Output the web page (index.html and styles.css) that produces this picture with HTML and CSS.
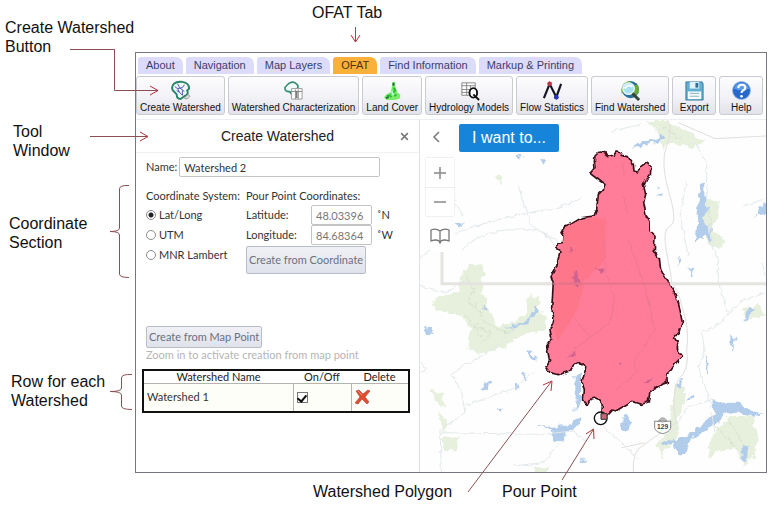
FILE: index.html
```html
<!DOCTYPE html>
<html lang="en">
<head>
<meta charset="utf-8">
<title>OFAT Create Watershed tool</title>
<link rel="stylesheet" href="styles.css">
</head>
<body>
<div class="guide">
  <aside class="notes">
    <p class="note note-button">Create Watershed Button</p>
    <p class="note note-window">Tool<br>Window</p>
    <p class="note note-coord">Coordinate<br>Section</p>
    <p class="note note-row">Row for each<br>Watershed</p>
  </aside>
  <div class="stage">
    <p class="note caption-top">OFAT Tab</p>
    <main class="app">
      <nav class="tabs">
        <a class="tab" href="#">About</a>
        <a class="tab" href="#">Navigation</a>
        <a class="tab" href="#">Map Layers</a>
        <a class="tab active" href="#">OFAT</a>
        <a class="tab" href="#">Find Information</a>
        <a class="tab" href="#">Markup &amp; Printing</a>
      </nav>
      <div class="toolbar">
        <button class="tool" type="button">
          <svg class="icon" viewBox="0 0 22 22"><path d="M4 4Q8 1 13 2Q20 3 20 9L18 11Q20 15 15 17L11 20Q7 20 7 15L3 11Q1 7 4 4Z" fill="#eef9f6" stroke="#278267" stroke-width="2"/><path d="M5 7l3 2 2 4 3 3M8 4l2 4 5 4M8 9l5-1 2-3M10 13l-3-2M13 16v-5" fill="none" stroke="#4b50b4"/><path d="M15 19l4-4 2 2-3 3z" fill="#ddd" stroke="#888" stroke-width=".8"/></svg>
          <span>Create Watershed</span></button>
        <button class="tool" type="button">
          <svg class="icon" viewBox="0 0 22 22"><path d="M9 15L7 12Q2 13 2 8Q4 5 7 3Q11 1 14 4Q17 6 15 9" fill="#f0faf7" stroke="#2f8a70" stroke-width="1.700"/><path d="M9 9h11v11H9z" fill="#fff" stroke="#999"/><path d="M9 12h11M13 10v10M16 10v10" stroke="#888"/><path d="M14.500 12v7" stroke="#333"/></svg>
          <span>Watershed Characterization</span></button>
        <button class="tool" type="button">
          <svg class="icon" viewBox="0 0 22 22"><path d="M11 2h3v5l1 3 1 3 3 2v4l-5 2H5l-3-3 3-3 4-2 1-4z" fill="#79ed69"/><path d="M12 8l2 3-2 2-3 1M5 17l3-1 2 2M13 17l2-2" fill="none" stroke="#2dbb32" stroke-width="2"/><path d="M12 3v3M4 19l3-1" stroke="#27634c" stroke-width="2"/><path d="M10 12l2 4" stroke="#b8ffd7" stroke-width="2"/></svg>
          <span>Land Cover</span></button>
        <button class="tool" type="button">
          <svg class="icon" viewBox="0 0 22 22"><path d="M3 3h14v13H3zM3 6h14M3 10h14M3 13h14M8 3v13M12 6v10" fill="#fff" stroke="#858585"/><ellipse cx="15" cy="13.500" rx="4" ry="5" fill="#fff" stroke="#111" stroke-width="2"/><path d="M15 15l6 6" stroke="#111" stroke-width="2"/></svg>
          <span>Hydrology Models</span></button>
        <button class="tool" type="button">
          <svg class="icon" viewBox="0 0 22 22"><path d="M2 19L8 4L15 18L20 4" fill="none" stroke="#161626" stroke-width="2.300"/><circle cx="8" cy="4" r="2.500" fill="#bc3545"/><circle cx="15" cy="18" r="2.500" fill="#2532b5"/></svg>
          <span>Flow Statistics</span></button>
        <button class="tool" type="button">
          <svg class="icon" viewBox="0 0 22 22"><circle cx="11" cy="10" r="9" fill="#2c7199"/><path d="M4 4q5-4 8-2l-3 4-5 4-2 5q-2-6 2-11zM14 6l5-1 1 7-4 5-3-4z" fill="#6bac38"/><circle cx="9" cy="9" r="6" fill="#a8e2ee" stroke="#e8f7f8" stroke-width="1.500"/><path d="M5 9q3-5 8-2" fill="none" stroke="#fff" stroke-width="2"/><path d="M13 14l7 7" stroke="#34483a" stroke-width="3"/></svg>
          <span>Find Watershed</span></button>
        <button class="tool" type="button">
          <svg class="icon" viewBox="0 0 22 22"><path d="M2 2h17l1 2v17H2z" fill="#62aed2" stroke="#347b9e"/><path d="M6 2h10v7H6z" fill="#e0f3fa"/><path d="M12 3h3v5h-3z" fill="#326f91"/><path d="M4 12h14v8H4z" fill="#fafefe"/><path d="M6 14h10M6 17h10" stroke="#7eafc2"/></svg>
          <span>Export</span></button>
        <button class="tool" type="button">
          <svg class="icon" viewBox="0 0 22 22"><circle cx="11" cy="11" r="9.500" fill="#2868c9" stroke="#a9c5ea"/><path d="M3 9Q5 3 11 3Q17 3 19 9Q12 13 3 9z" fill="#5b9ce9"/><path d="M7.500 8.500Q8 5 11.500 5Q15 5 15 8Q15 10 12.500 11Q11 12 11 13.500" fill="none" stroke="#fff" stroke-width="2.200"/><circle cx="11" cy="17" r="1.400" fill="#fff"/></svg>
          <span>Help</span></button>
      </div>
      <div class="work">
        <section class="panel">
          <header class="panel-head">
            <h1>Create Watershed</h1>
            <button class="close" type="button" aria-label="Close"><svg viewBox="0 0 8 8"><path d="M1 1l6 6M7 1l-6 6" stroke="#777" stroke-width="1.300"/></svg></button>
          </header>
          <form class="form">
            <div class="name-row"><label for="name">Name:</label><input class="box" id="name" type="text" value="Watershed 2"></div>
            <div class="coords">
              <fieldset class="systems">
                <legend>Coordinate System:</legend>
                <label><input type="radio" name="system" checked>Lat/Long</label>
                <label><input type="radio" name="system">UTM</label>
                <label><input type="radio" name="system">MNR Lambert</label>
              </fieldset>
              <fieldset class="point">
                <legend>Pour Point Coordinates:</legend>
                <div class="coord"><label for="lat">Latitude:</label><input class="box" id="lat" type="text" value="48.03396"><span>˚N</span></div>
                <div class="coord"><label for="lon">Longitude:</label><input class="box" id="lon" type="text" value="84.68364"><span>˚W</span></div>
                <button class="action tall" type="button">Create from Coordinate</button>
              </fieldset>
            </div>
            <button class="action" type="button">Create from Map Point</button>
            <p class="hint">Zoom in to activate creation from map point</p>
          </form>
          <table class="sheds">
            <thead><tr><th class="col-name">Watershed Name</th><th class="col-on">On/Off</th><th>Delete</th></tr></thead>
            <tbody><tr>
              <td>Watershed 1</td>
              <td><input type="checkbox" aria-label="Show Watershed 1" checked></td>
              <td><button class="delete" type="button" aria-label="Delete Watershed 1"><svg viewBox="0 0 16 16"><path d="M1 2l3-1 4 4 5-4 2 1-5 6 4 5-2 2-5-5-4 5-3-1 5-6z" fill="#e24b30" stroke="#b23a2b" stroke-width=".6"/><path d="M3 2l4 4" stroke="#f5977d"/></svg></button></td>
            </tr></tbody>
          </table>
        </section>
        <section class="map">
          <svg class="map-art" viewBox="15 12 1038 1059" preserveAspectRatio="xMinYMin slice">
            <defs>
              <filter id="rough" x="-5%" y="-5%" width="110%" height="110%" color-interpolation-filters="sRGB"><feTurbulence type="fractalNoise" baseFrequency=".07" numOctaves="1" seed="4"/><feDisplacementMap in="SourceGraphic" scale="14" xChannelSelector="R" yChannelSelector="G"/></filter>
              <filter id="ragged" x="-5%" y="-5%" width="110%" height="110%" color-interpolation-filters="sRGB"><feTurbulence type="fractalNoise" baseFrequency=".05" numOctaves="2" seed="9"/><feDisplacementMap in="SourceGraphic" scale="24" xChannelSelector="R" yChannelSelector="G"/></filter>
            </defs>
            <rect x="15" y="12" width="1400" height="1400" fill="#fdfefd"/>
            <g fill="#e6f0dc" filter="url(#ragged)">
              <path d="M155 455l45-12 10 20-10 30 5 50 20 50 20 37 60-12 30-35-5-25 20-20 25 10-5 35 25 25-10 40-55 3-50 35-70 28-50-12 5-60-30-50-65-8-20-15 20-25 60-15 10-55z"/>
              <path d="M690 15l60 0 40 18 80 45-30 15-70-10-30 15-10-50zM870 245l45 10-8 50-20 40 45 25-15 25-35-5-30-60z"/>
              <path d="M780 800l30 10 0 50-20 40-5 60-45 65-15-40 35-50 10-60zM890 960l60-60 60 0 20 60-10 60-30 25-30-50-50 10-30 20z"/>
              <path d="M240 180l30 0-15 30zM980 580l50-12 20 30-60 15zM45 820l40 10 5 50-25-20zM85 965l45 0-5 45-40-10zM70 885l30 40-15 30zM360 1055l40-5 0 20h-45z"/>
            </g>
            <g fill="none" stroke="#d3e2d0" stroke-width="3" filter="url(#ragged)">
              <path d="M150 480l30 40-20 40 40 30-20 40 50 20-30 30M180 560l30 60 60 30 40-20M150 600l50 60M740 30l60 40M895 920l70 80M930 900l60 90M880 270l10 90"/>
            </g>
            <g fill="#b2cceb" filter="url(#ragged)">
              <path d="M855 205l13 0 0 60 17 8-20 35 25 35-3 35-18-20-27 20 5-70z"/>
              <path d="M365 930l50 2 50-8 35-22-10 25-35 25-22 27-18-2-5-40-45-3z"/>
              <path d="M478 780l20-10 0 85-20 35 5-60zM620 915l15-22 17 30-15 25-20-5zM195 820l15-20 15-8-2 25-12 8zM300 820l20-5-15-15zM317 765l12 0 8 32-7 0zM1020 310l20-45 15-5 0 30-25 5z"/>
              <path d="M895 850l25 10 50 0 50 30 25 5-30 7-45-15-40 5-25 30-45 30-40 20-5-10 50-40 35-30-10-20zM780 800l25-15-10 30zM815 855l20-22 5 15zM740 975l35-5 55-15-20 60-20 0-15-30-30 5zM980 985l20 5-5 45-15-5zM650 95l30-18 40-7 20-15 12 5-25 18-22 3-25 12z"/>
              <path d="M375 130l20 0-8 13zM118 325l35-3-10 10zM335 700l25 20 5 18-30-28zM205 565l12 20-15-5zM785 430l12-5-10 23zM820 455l18 0-8 30zM945 655l14 15-9 38zM30 635l20 5-10 17zM40 650l18 5-20 3zM305 117l15 0-10 15zM870 715l8 28-3 42-5-35zM270 640l65-25 30-45 8 10-35 45zM1005 570l15 10-30 35-8-5zM495 1025l20 8-17 9zM245 880l18-4-8 15zM725 205l10 8-8 3zM720 237l25-5 0 8z"/>
            </g>
            <g fill="none" stroke="#e2e8ec" stroke-width="3" filter="url(#rough)">
              <path d="M15 430Q60 380 110 355Q200 320 340 290L430 275 500 245M140 405Q180 350 290 340T420 395M310 210L335 290 350 330 435 380M110 240l35 60M590 45l90-20M840 80l35 60 0 150 15 90 20 60 0 60 30 90-20 30-60 30 10 55-20 50 35 100 15 100M1000 1020l-20 40M15 740Q45 760 20 770M300 640l-95 80-65 30-30 25 30 55 10 60-75 50 5 150-15 55M75 950l300 5 100-10M150 870l150-55 60-50M430 985l-45 55-90 10M470 945l50 35M560 930l50 40 60 60M985 270l60-20M1040 440l20 60M820 420l-25-120 20-110M15 510l80 20 60-40M900 850l-80 20-50 80M940 590l50-40 60-20"/>
            </g>
            <g fill="none" stroke="#e3dedb" stroke-width="3">
              <path d="M758 12Q775 40 755 90T762 230 765 330 755 410 770 500Q790 520 800 570Q825 640 815 700Q825 760 790 790Q765 850 785 920Q720 960 690 985Q650 1000 655 1071"/>
              <path d="M790 20L900 68 1053 60M620 995l70-15"/>
            </g>
            <path d="M81 408V503H1400" fill="none" stroke="#e5e4e0" stroke-width="9"/>
            <g filter="url(#rough)">
              <path d="M540 120L552 108 570 110 578 122 597 117 603 108 618 110 622 118 640 122 645 132 655 145 657 165 668 168 680 152 697 139 708 148 706 180 690 195 685 205 692 235 686 260 694 300 705 315 706 345 720 358 718 405 733 430 737 460 750 485 765 505 780 535 790 560 797 595 803 625 793 645 778 665 788 680 787 700 802 720 785 738 770 760 755 775 757 800 740 805 728 812 705 825 700 858 680 865 650 856 640 865 605 885 590 882 578 895 572 905 560 895 562 870 555 852 540 845 525 850 515 868 505 850 508 820 500 800 512 755 490 738 478 745 465 765 430 776 405 770 393 755 404 735 395 690 410 670 405 640 418 610 410 580 415 500 408 480 425 450 435 405 420 395 430 382 445 380 447 365 438 350 450 330 475 320 500 305 537 300 545 280 550 235 565 220 570 205 555 195 525 172 540 155 538 135Z" fill="#ff7d99" stroke="#351018" stroke-width="5" stroke-linejoin="round"/>
              <path d="M450 335l50-25 72-5-2 130-60 60-20 80-60 100-12-20 2-170 20-80z" fill="#fd7689"/>
              <path d="M470 485l15-20 12 35-10 15zM540 455l25 5-5 15zM455 725l30-20-5 20zM685 800l30-18-15 20zM612 738l10 5-8 8zM465 395l10 5-8 8z" fill="#cf638f"/>
              <path d="M475 600l50 65 60-45 15-70-30-80 0-100M620 140l10 40M625 240l15 50M640 370l45 130 20 80 15 60-60 90 0 45-60 50M525 665l-65 50" fill="none" stroke="#ea7894" stroke-width="3"/>
            </g>
            <path d="M415 503H763" stroke="#e6758b" stroke-width="7"/>
            <circle cx="557" cy="907" r="19" fill="none" stroke="#111" stroke-width="4"/>
            <path d="M558 893h18v17h-18z" fill="#c96777" stroke="#333" stroke-width="3"/>
            <path d="M730 914q13-18 26 0z" fill="#bbb" stroke="#888" stroke-width="2"/>
            <path d="M719 915q24 5 48 0v22q-5 12-24 16q-19-4-24-16z" fill="#fff" stroke="#888" stroke-width="3"/>
            <text class="route" x="743" y="940">129</text>
          </svg>
          <div class="map-ui">
            <div class="map-top">
              <button class="map-back" type="button" aria-label="Collapse panel"><svg viewBox="0 0 12 12"><path d="M8 1L3 6l5 5" fill="none" stroke="#777" stroke-width="1.500"/></svg></button>
              <button class="want" type="button">I want to...</button>
            </div>
            <div class="zoom">
              <button type="button" aria-label="Zoom in"><svg viewBox="0 0 14 14"><path d="M1 7h12M7 1v12" stroke="#888" stroke-width="1.500"/></svg></button>
              <button type="button" aria-label="Zoom out"><svg viewBox="0 0 14 14"><path d="M1 7h12" stroke="#888" stroke-width="1.500"/></svg></button>
            </div>
            <button class="book" type="button" aria-label="Bookmarks"><svg viewBox="0 0 20 16"><path d="M10 3Q6 0 1 2v11q5-2 8 0l1 2 1-2q3-2 8 0V2q-5-2-9 1zv11" fill="none" stroke="#777" stroke-width="1.300"/></svg></button>
          </div>
        </section>
      </div>
    </main>
    <div class="captions-bottom">
      <p class="note">Watershed Polygon</p>
      <p class="note">Pour Point</p>
    </div>
  </div>
  <svg class="pointers" width="773" height="526" viewBox="0 0 773 526" aria-hidden="true">
    <g fill="none" stroke="#8a5054">
      <path d="M70 49.500H114.500V90.500H158M90 136.500H147M355.500 27V42M468 492L551 382M562 480L593 430"/>
      <path d="M129 185.500Q119.500 185 119.500 189V228Q119.500 231.500 110 231.500Q119.500 231.500 119.500 235V274Q119.500 277.500 129 277.500M132 374.500Q121.500 374 121.500 378V388Q121.500 391.500 110 391.500Q121.500 391.500 121.500 395V406Q121.500 409.500 132 409.500"/>
    </g>
    <g fill="none" stroke="#bd3038">
      <path d="M150 86L158 90.500 150 95M140 132L148 136.500 140 141M351 35L355.500 42 360 35M543 385L552 381 551 391M586 434L593.500 429 594 439"/>
    </g>
  </svg>
</div>
</body>
</html>
```
FILE: styles.css
```css
* { box-sizing: border-box; }
body {
  margin: 0;
  background: #fff;
  color: #333;
  font-family: "Liberation Sans", Arial, sans-serif;
}
button, input { font: inherit; margin: 0; }
button { cursor: pointer; }
p, h1 { margin: 0; }
svg { display: block; }

.guide {
  position: relative;
  display: grid;
  grid-template-columns: 135px minmax(0, 1fr);
  min-height: 100vh;
}
.note {
  color: #111;
  font-size: 16px;
  line-height: 19px;
  white-space: nowrap;
}
.notes { display: flex; flex-direction: column; padding: 18px 0 0 5px; }
.note-button { white-space: normal; }
.note-window { margin: 66px 0 0 8px; }
.note-coord { margin: 54px 0 0 4px; }
.note-row { margin: 120px 0 0 6px; }
.stage { display: flex; flex-direction: column; padding-right: 6px; }
.caption-top { padding: 3px 0 30px 177px; }
.captions-bottom { display: flex; gap: 50px; padding: 9px 0 25px 178px; }
.pointers { position: absolute; top: 0; left: 0; pointer-events: none; }

.app {
  flex: 1;
  display: flex;
  flex-direction: column;
  border: 1px solid #74777e;
}
.tabs { display: flex; gap: 3px; padding: 4px 2px 0; }
.tab {
  padding: 0 8px;
  border-radius: 3px 7px 0 0;
  background: #dcdcfa;
  color: #3c3c6c;
  font-size: 11px;
  line-height: 17px;
  text-decoration: none;
  white-space: nowrap;
}
.tab.active { background: #fbb03c; color: #4c3513; }
.toolbar { display: flex; gap: 3px; padding: 2px 0 4px; }
.tool {
  display: flex;
  flex-direction: column;
  align-items: center;
  min-width: 44px;
  height: 39px;
  padding: 3px 3px 0;
  border: 1px solid #c9cbd2;
  border-radius: 3px;
  background: linear-gradient(#fdfdfe, #f3f3f8 50%, #e2e3e9);
  color: #111;
  font-size: 10px;
  line-height: 14px;
  white-space: nowrap;
}
.icon { width: 21px; height: 21px; flex: none; }

.work {
  flex: 1;
  display: grid;
  grid-template-columns: 284px minmax(0, 1fr);
  border-top: 1px solid #eceef2;
}
.panel {
  border-right: 1px solid #dfe3e8;
  font-family: Lato, "Open Sans", sans-serif;
  font-size: 11px;
  line-height: 14px;
}
.panel-head {
  display: grid;
  grid-template-columns: 28px 1fr 28px;
  align-items: center;
  height: 33px;
  border-bottom: 1px solid #f0f1f3;
}
.panel-head h1 {
  grid-column: 2;
  color: #222;
  font: 14px/18px "Liberation Sans", Arial, sans-serif;
  text-align: center;
}
.close { padding: 8px 9px; border: 0; background: none; }
.close svg { width: 9px; height: 9px; }
.form { padding: 4px 10px 0; }
.name-row { display: flex; align-items: center; gap: 2px; }
.box {
  height: 20px;
  padding: 0 4px;
  border: 1px solid #c4c4c4;
  border-radius: 2px;
  background: #fff;
  color: #333;
}
.name-row .box { width: 201px; }
.coords { display: flex; gap: 8px; margin-top: 12px; }
fieldset { min-width: 0; margin: 0; padding: 0; border: 0; }
legend { padding: 0; }
.systems { display: flex; flex-direction: column; width: 92px; white-space: nowrap; }
.systems label { display: flex; align-items: center; gap: 3px; height: 20px; }
.systems legend, .point legend { margin-bottom: 2px; }
.systems input {
  appearance: none;
  width: 10px;
  height: 10px;
  border: 1px solid #8c8c8c;
  border-radius: 50%;
}
.systems input:checked { background: radial-gradient(#222 0 2px, #fff 3px); }
.coord { display: flex; align-items: center; height: 20px; }
.coord label { width: 65px; }
.coord .box { width: 61px; color: #777; }
.coord span { margin-left: 5px; }
.action {
  display: block;
  height: 22px;
  padding: 0 2px;
  border: 1px solid #b9bdc8;
  border-radius: 2px;
  background: linear-gradient(#f0f1f6, #dfe2ec);
  color: #6c717d;
  white-space: nowrap;
}
.action.tall { height: 28px; margin-top: 1px; }
.form > .action { margin-top: 52px; }
.hint { color: #b5b5b5; }
.sheds {
  width: 268px;
  margin: 7px 0 0 6px;
  border: 2px solid #111;
  border-collapse: collapse;
  table-layout: fixed;
}
.sheds th { height: 13px; padding: 0; font-weight: 400; line-height: 12px; color: #222; }
.sheds td { height: 28px; padding: 0 3px; border: 1px solid #b5b5b0; background: #fefef8; }
.col-name { width: 150px; }
.col-on { width: 58px; }
.sheds input {
  appearance: none;
  display: grid;
  place-items: center;
  width: 11px;
  height: 11px;
  border: 1px solid #777;
  background: #fff;
}
.sheds input:checked::after {
  content: "";
  width: 4px;
  height: 7px;
  border: solid #111;
  border-width: 0 2px 2px 0;
  transform: rotate(40deg);
}
.delete { display: block; padding: 0; border: 0; background: none; }
.delete svg { width: 16px; height: 16px; }

.map { position: relative; overflow: hidden; }
.map-art { position: absolute; inset: 0; width: 100%; height: 100%; }
.route { font: 700 20px "Liberation Sans", Arial, sans-serif; text-anchor: middle; fill: #444; }
.map-ui { position: relative; display: flex; flex-direction: column; align-items: flex-start; }
.map-top { display: flex; align-items: flex-start; gap: 6px; }
.map-ui button { display: grid; place-items: center; border: 0; }
.map-back { width: 33px; height: 33px; background: #fff; }
.map-back svg { width: 12px; height: 12px; }
.map-ui .want {
  width: 100px;
  height: 28px;
  margin-top: 4px;
  padding: 0;
  border-radius: 2px;
  background: #1685d9;
  color: #fff;
  font-size: 16px;
}
.zoom { margin: 4px 0 0 5px; border: 1px solid #f0f0f0; border-radius: 2px; background: #fff; }
.zoom button { width: 28px; height: 29px; background: #fff; }
.zoom button + button { border-top: 1px solid #eee; }
.zoom svg { width: 14px; height: 14px; }
.map-ui .book { width: 29px; height: 28px; margin: 5px 0 0 5px; padding: 0; background: #fff; }
.book svg { width: 20px; height: 16px; }
```
